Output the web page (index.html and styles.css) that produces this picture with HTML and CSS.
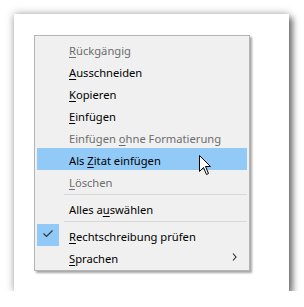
FILE: index.html
```html
<!DOCTYPE html>
<html lang="de">
<head>
<meta charset="UTF-8">
<title>Kontextmenü</title>
<link rel="stylesheet" href="styles.css">
</head>
<body>
  <div class="frame">
    <div class="menu">
      <div class="item disabled"><span class="icon"></span><span class="label"><u>R</u>ückgängig</span></div>
      <div class="item"><span class="icon"></span><span class="label"><u>A</u>usschneiden</span></div>
      <div class="item"><span class="icon"></span><span class="label"><u>K</u>opieren</span></div>
      <div class="item"><span class="icon"></span><span class="label"><u>E</u>infügen</span></div>
      <div class="item disabled"><span class="icon"></span><span class="label">Einfügen <u>o</u>hne Formatierung</span></div>
      <div class="item active"><span class="icon"></span><span class="label">Als <u>Z</u>itat einfügen</span></div>
      <div class="item disabled"><span class="icon"></span><span class="label"><u>L</u>öschen</span></div>
      <div class="sep"></div>
      <div class="item"><span class="icon"></span><span class="label">Alles a<u>u</u>swählen</span></div>
      <div class="sep"></div>
      <div class="item"><span class="icon checked">
        <svg width="22" height="22" viewBox="0 0 22 22"><path d="M6.5 9.5 L9.5 12.5 L15.5 6.5" fill="none" stroke="#333" stroke-width="1.2"/></svg>
      </span><span class="label"><u>R</u>echtschreibung prüfen</span></div>
      <div class="item"><span class="icon"></span><span class="label"><u>S</u>prachen</span>
        <svg class="arrow" width="5" height="8" viewBox="0 0 5 8"><path d="M1 0.5 L4 4 L1 7.5" fill="none" stroke="#222" stroke-width="1.1"/></svg>
      </div>
      <svg class="cursor" width="13" height="21" viewBox="0 0 13 21">
        <path d="M0.5 0.5 L0.5 16.5 L4.5 12.5 L7.5 19.5 L9.5 18.5 L6.5 11.5 L11.5 11.5 Z" fill="#fff" stroke="#000" stroke-width="1"/>
      </svg>
    </div>
  </div>
</body>
</html>
```

FILE: styles.css
```css
body {
  margin: 0;
  background-color: #ffffff;
  font-family: "Noto Sans", Arial, sans-serif;
  font-size: 11.2px;
}
.frame {
  margin: 14px 0 0 14px;
  width: 275px;
  height: 277px;
  box-sizing: border-box;
  padding: 21px 0 0 20px;
  background-color: #fff;
  box-shadow: 0 0 8px rgba(0, 0, 0, 0.35), 4px 4px 6px rgba(0, 0, 0, 0.45);
}
.menu {
  position: relative;
  width: 216px;
  box-sizing: border-box;
  padding: 2px;
  background-color: #f0f0f0;
  border: 1px solid #b4b4b4;
  box-shadow: 2px 2px 2px rgba(0, 0, 0, 0.35);
}
.item {
  display: flex;
  align-items: center;
  height: 22px;
  color: #000;
}
.item.disabled {
  color: #6d6d6d;
}
.item.active {
  background-color: #91c9f7;
}
.icon {
  width: 22px;
  height: 22px;
  flex: 0 0 auto;
}
.icon.checked {
  background-color: #91c9f7;
}
.icon svg {
  display: block;
}
.label {
  margin-left: 10px;
  flex: 1;
  white-space: nowrap;
  line-height: 22px;
  padding-top: 2px;
  box-sizing: border-box;
  height: 22px;
}
.label u {
  text-underline-offset: 2px;
}
.arrow {
  margin-right: 10px;
}
.sep {
  height: 1px;
  margin: 2px 0 2px 27px;
  background-color: #d7d7d7;
}
.cursor {
  position: absolute;
  left: 164px;
  top: 119px;
}
```
